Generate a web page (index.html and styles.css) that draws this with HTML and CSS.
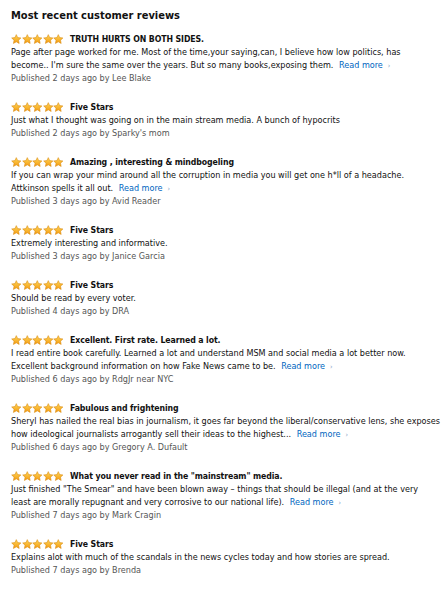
FILE: index.html
```html
<!DOCTYPE html>
<html>
<head>
<meta charset="utf-8">
<link rel="stylesheet" href="styles.css">
</head>
<body>
<svg width="0" height="0" class="defs">
  <defs>
    <linearGradient id="sg" x1="0" y1="0" x2="0" y2="1">
      <stop offset="0" stop-color="#ffd85a"/>
      <stop offset="1" stop-color="#f39a10"/>
    </linearGradient>
    <symbol id="star" viewBox="0 0 20 20">
      <path d="M10 1.2l2.6 5.6 6.1.7-4.5 4.2 1.2 6.1L10 14.8l-5.4 3 1.2-6.1L1.3 7.5l6.1-.7z" fill="url(#sg)" stroke="#d98a10" stroke-width="1.1" stroke-linejoin="round"/>
    </symbol>
  </defs>
</svg>
<div class="page">
  <h2 class="heading">Most recent customer reviews</h2>

  <div class="review">
    <div class="head"><span class="stars"><svg><use href="#star"/></svg><svg><use href="#star"/></svg><svg><use href="#star"/></svg><svg><use href="#star"/></svg><svg><use href="#star"/></svg></span><span class="title">TRUTH HURTS ON BOTH SIDES.</span></div>
    <div class="body">Page after page worked for me. Most of the time,your saying,can, I believe how low politics, has<br>become.. I'm sure the same over the years. But so many books,exposing them. <a class="more">Read more<span class="chev">›</span></a></div>
    <div class="meta">Published 2 days ago by Lee Blake</div>
  </div>

  <div class="review">
    <div class="head"><span class="stars"><svg><use href="#star"/></svg><svg><use href="#star"/></svg><svg><use href="#star"/></svg><svg><use href="#star"/></svg><svg><use href="#star"/></svg></span><span class="title">Five Stars</span></div>
    <div class="body">Just what I thought was going on in the main stream media. A bunch of hypocrits</div>
    <div class="meta">Published 2 days ago by Sparky's mom</div>
  </div>

  <div class="review">
    <div class="head"><span class="stars"><svg><use href="#star"/></svg><svg><use href="#star"/></svg><svg><use href="#star"/></svg><svg><use href="#star"/></svg><svg><use href="#star"/></svg></span><span class="title">Amazing , interesting &amp; mindbogeling</span></div>
    <div class="body">If you can wrap your mind around all the corruption in media you will get one h*ll of a headache.<br>Attkinson spells it all out. <a class="more">Read more<span class="chev">›</span></a></div>
    <div class="meta">Published 3 days ago by Avid Reader</div>
  </div>

  <div class="review">
    <div class="head"><span class="stars"><svg><use href="#star"/></svg><svg><use href="#star"/></svg><svg><use href="#star"/></svg><svg><use href="#star"/></svg><svg><use href="#star"/></svg></span><span class="title">Five Stars</span></div>
    <div class="body">Extremely interesting and informative.</div>
    <div class="meta">Published 3 days ago by Janice Garcia</div>
  </div>

  <div class="review">
    <div class="head"><span class="stars"><svg><use href="#star"/></svg><svg><use href="#star"/></svg><svg><use href="#star"/></svg><svg><use href="#star"/></svg><svg><use href="#star"/></svg></span><span class="title">Five Stars</span></div>
    <div class="body">Should be read by every voter.</div>
    <div class="meta">Published 4 days ago by DRA</div>
  </div>

  <div class="review">
    <div class="head"><span class="stars"><svg><use href="#star"/></svg><svg><use href="#star"/></svg><svg><use href="#star"/></svg><svg><use href="#star"/></svg><svg><use href="#star"/></svg></span><span class="title">Excellent. First rate. Learned a lot.</span></div>
    <div class="body">I read entire book carefully. Learned a lot and understand MSM and social media a lot better now.<br>Excellent background information on how Fake News came to be. <a class="more">Read more<span class="chev">›</span></a></div>
    <div class="meta">Published 6 days ago by RdgJr near NYC</div>
  </div>

  <div class="review">
    <div class="head"><span class="stars"><svg><use href="#star"/></svg><svg><use href="#star"/></svg><svg><use href="#star"/></svg><svg><use href="#star"/></svg><svg><use href="#star"/></svg></span><span class="title">Fabulous and frightening</span></div>
    <div class="body">Sheryl has nailed the real bias in journalism, it goes far beyond the liberal/conservative lens, she exposes<br>how ideological journalists arrogantly sell their ideas to the highest... <a class="more">Read more<span class="chev">›</span></a></div>
    <div class="meta">Published 6 days ago by Gregory A. Dufault</div>
  </div>

  <div class="review">
    <div class="head"><span class="stars"><svg><use href="#star"/></svg><svg><use href="#star"/></svg><svg><use href="#star"/></svg><svg><use href="#star"/></svg><svg><use href="#star"/></svg></span><span class="title">What you never read in the "mainstream" media.</span></div>
    <div class="body">Just finished "The Smear" and have been blown away – things that should be illegal (and at the very<br>least are morally repugnant and very corrosive to our national life). <a class="more">Read more<span class="chev">›</span></a></div>
    <div class="meta">Published 7 days ago by Mark Cragin</div>
  </div>

  <div class="review">
    <div class="head"><span class="stars"><svg><use href="#star"/></svg><svg><use href="#star"/></svg><svg><use href="#star"/></svg><svg><use href="#star"/></svg><svg><use href="#star"/></svg></span><span class="title">Five Stars</span></div>
    <div class="body">Explains alot with much of the scandals in the news cycles today and how stories are spread.</div>
    <div class="meta">Published 7 days ago by Brenda</div>
  </div>
</div>
</body>
</html>
```

FILE: styles.css
```css
html, body {
  margin: 0;
  padding: 0;
  background: #ffffff;
}
.defs {
  position: absolute;
  width: 0;
  height: 0;
}
.page {
  padding: 7px 0 0 11px;
  font-family: "DejaVu Sans Condensed", "DejaVu Sans", sans-serif;
  font-size: 9px;
  color: #111111;
}
.heading {
  margin: 0 0 7px 0;
  font-family: "DejaVu Sans Condensed", "DejaVu Sans", sans-serif;
  font-size: 11px;
  font-weight: bold;
  line-height: 18px;
  color: #111111;
}
.review {
  margin-bottom: 15px;
}
.head {
  display: flex;
  align-items: center;
  height: 14px;
}
.stars {
  display: flex;
  margin-right: 6px;
}
.stars svg {
  width: 10.6px;
  height: 10.6px;
}
.title {
  font-weight: bold;
  font-size: 8.7px;
  letter-spacing: -0.1px;
  line-height: 13px;
}
.body {
  line-height: 13px;
  white-space: nowrap;
}
.meta {
  line-height: 13px;
  color: #555555;
}
.more {
  color: #0066c0;
  margin-left: 3px;
}
.chev {
  font-size: 7px;
  line-height: 1;
  color: #7a9bc4;
  margin-left: 5px;
}
```
